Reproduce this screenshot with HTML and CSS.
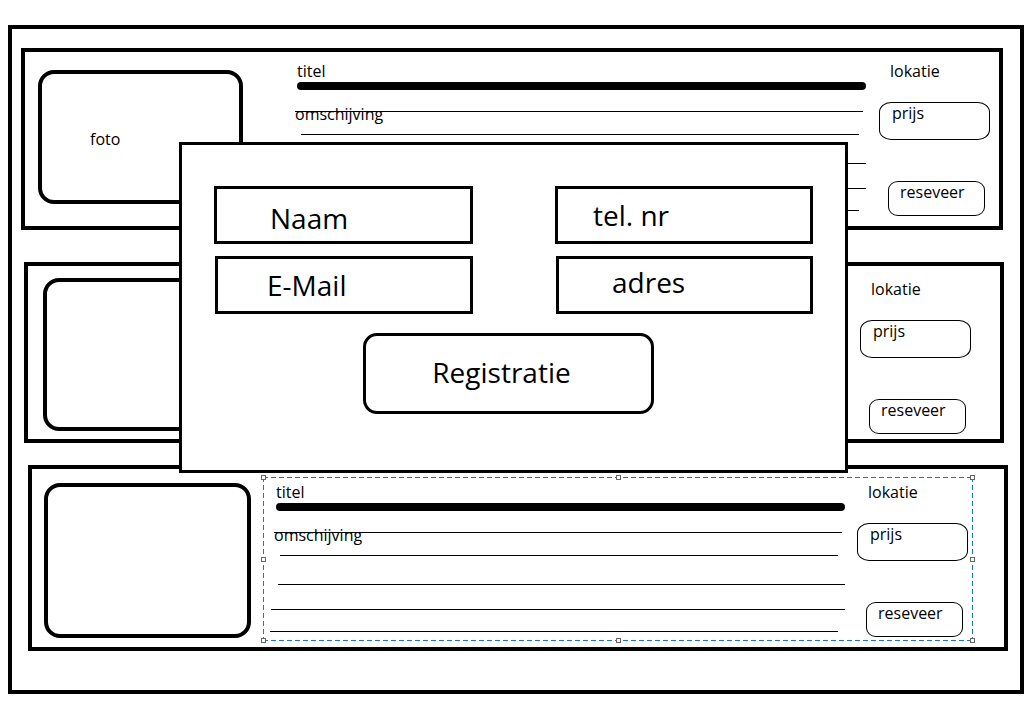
FILE: index.html
```html
<!DOCTYPE html>
<html lang="nl">
<head>
    <meta charset="UTF-8">
    <meta name="viewport" content="width=device-width, initial-scale=1.0">
    <title>Reseveren - schets</title>
    <link rel="stylesheet" href="styles.css">
</head>
<body>
    <div class="frame">

        <!-- kaart 1 -->
        <div class="card card-1">
            <div class="photo">foto</div>
            <div class="main">
                <div class="label">titel</div>
                <div class="bar"></div>
                <div class="label desc">omschijving</div>
                <div class="lines">
                    <div class="line l1"></div>
                    <div class="line l2"></div>
                    <div class="line l3"></div>
                    <div class="line l4"></div>
                    <div class="line l5"></div>
                </div>
            </div>
            <div class="side">
                <div class="label loc">lokatie</div>
                <div class="price">prijs</div>
                <div class="book">reseveer</div>
            </div>
        </div>

        <!-- kaart 2 (tekst valt onder de popup) -->
        <div class="card card-2">
            <div class="photo"></div>
            <div class="main">
                <div class="label"></div>
                <div class="bar"></div>
                <div class="label desc"></div>
                <div class="lines">
                    <div class="line l1"></div>
                    <div class="line l2"></div>
                    <div class="line l3"></div>
                    <div class="line l4"></div>
                    <div class="line l5"></div>
                </div>
            </div>
            <div class="side">
                <div class="label loc">lokatie</div>
                <div class="price">prijs</div>
                <div class="book">reseveer</div>
            </div>
        </div>

        <!-- kaart 3 (geselecteerd) -->
        <div class="card card-3">
            <div class="photo"></div>
            <div class="main">
                <div class="label">titel</div>
                <div class="bar"></div>
                <div class="label desc">omschijving</div>
                <div class="lines">
                    <div class="line l1"></div>
                    <div class="line l2"></div>
                    <div class="line l3"></div>
                    <div class="line l4"></div>
                    <div class="line l5"></div>
                </div>
            </div>
            <div class="side">
                <div class="label loc">lokatie</div>
                <div class="price">prijs</div>
                <div class="book">reseveer</div>
            </div>

            <div class="selection">
                <span class="handle h-tl"></span>
                <span class="handle h-tm"></span>
                <span class="handle h-tr"></span>
                <span class="handle h-ml"></span>
                <span class="handle h-mr"></span>
                <span class="handle h-bl"></span>
                <span class="handle h-bm"></span>
                <span class="handle h-br"></span>
            </div>
        </div>

        <!-- registratie popup -->
        <div class="modal">
            <div class="fields">
                <div class="field f-naam">Naam</div>
                <div class="field f-tel">tel. nr</div>
                <div class="field f-mail">E-Mail</div>
                <div class="field f-adres">adres</div>
            </div>
            <div class="register">Registratie</div>
        </div>

    </div>
</body>
</html>
```

FILE: styles.css
```css
body {
    margin: 0;
    background: #fff;
    color: #000;
    font-family: "Open Sans", "Noto Sans", sans-serif;
}

.frame {
    position: relative;
    box-sizing: border-box;
    width: 1016px;
    height: 669px;
    margin: 25px 0 0 8px;
    border: 4px solid #000;
}

/* kaarten */
.card {
    position: relative;
    box-sizing: border-box;
    display: flex;
    align-items: flex-start;
    border: 4px solid #000;
}

.card-1 {
    width: 982px;
    height: 182px;
    margin: 19px 0 0 9px;
}

.card-2 {
    width: 980px;
    height: 181px;
    margin: 32px 0 0 12px;
}

.card-3 {
    width: 980px;
    height: 186px;
    margin: 22px 0 0 16px;
}

.photo {
    flex-shrink: 0;
    box-sizing: border-box;
    border: 4px solid #000;
    border-radius: 16px;
    font-size: 16px;
    line-height: 20px;
}

.card-1 .photo {
    width: 205px;
    height: 134px;
    margin: 18px 0 0 13px;
    padding: 55px 0 0 48px;
}

.card-2 .photo {
    width: 205px;
    height: 153px;
    margin: 12px 0 0 15px;
}

.card-3 .photo {
    width: 207px;
    height: 155px;
    margin: 14px 0 0 12px;
}

.main {
    flex-shrink: 0;
    width: 569px;
}

.card-1 .main { margin-left: 54px; padding-top: 9px; }
.card-2 .main { margin-left: 20px; padding-top: 12px; }
.card-3 .main { margin-left: 25px; padding-top: 13px; }

.label {
    min-height: 20px;
    font-size: 16px;
    line-height: 20px;
}

.bar {
    height: 8px;
    margin-top: 1px;
    background: #000;
    border-radius: 4px;
}

.desc {
    margin: 14px 0 0 -2px;
}

.lines {
    margin-top: -13px;
}

.line {
    height: 1px;
    background: #000;
}

.l1 { width: 568px; margin-left: -2px; }
.l2 { width: 558px; margin: 22px 0 0 4px; }
.l3 { width: 567px; margin: 28px 0 0 2px; }
.l4 { width: 574px; margin: 24px 0 0 -5px; }
.l5 { width: 568px; margin: 21px 0 0 -6px; }

/* rechter kolom */
.side {
    display: flex;
    flex-direction: column;
    align-items: flex-start;
}

.card-1 .side { margin-left: 13px; padding-top: 9px; }
.card-2 .side { margin-left: 23px; padding-top: 13px; }
.card-3 .side { margin-left: 12px; padding-top: 13px; }

.loc {
    margin-left: 11px;
}

.price,
.book {
    box-sizing: border-box;
    border: 1px solid #000;
    font-size: 16px;
    line-height: 20px;
}

.price {
    width: 111px;
    height: 38px;
    margin-top: 21px;
    padding-left: 12px;
    border-radius: 12px / 10px;
}

.book {
    width: 97px;
    height: 35px;
    margin: 41px 0 0 9px;
    padding-left: 11px;
    border-radius: 10px / 9px;
}

/* selectie kader (paint) */
.selection {
    position: absolute;
    left: 231px;
    top: 8px;
    width: 710px;
    height: 164px;
    background:
        repeating-linear-gradient(90deg, #0f78d4 0 5px, transparent 5px 8px) top left / 100% 1px no-repeat,
        repeating-linear-gradient(90deg, #0f78d4 0 5px, transparent 5px 8px) bottom left / 100% 1px no-repeat,
        repeating-linear-gradient(180deg, #0f78d4 0 5px, transparent 5px 8px) top left / 1px 100% no-repeat,
        repeating-linear-gradient(180deg, #0f78d4 0 5px, transparent 5px 8px) top right / 1px 100% no-repeat;
}

.handle {
    position: absolute;
    width: 5px;
    height: 5px;
    box-sizing: border-box;
    border: 1px solid #666;
    background: #fff;
}

.h-tl { left: -2px; top: -2px; }
.h-tm { left: 353px; top: -2px; }
.h-tr { right: -2px; top: -2px; }
.h-ml { left: -2px; top: 80px; }
.h-mr { right: -2px; top: 80px; }
.h-bl { left: -2px; bottom: -2px; }
.h-bm { left: 353px; bottom: -2px; }
.h-br { right: -2px; bottom: -2px; }

/* popup */
.modal {
    position: absolute;
    left: 167px;
    top: 113px;
    box-sizing: border-box;
    width: 669px;
    height: 331px;
    padding: 41px 0 0 32px;
    border: 3px solid #000;
    background: #fff;
}

.fields {
    display: grid;
    grid-template-columns: 259px 259px;
    grid-auto-rows: 58px;
    column-gap: 81px;
    row-gap: 12px;
}

.field {
    box-sizing: border-box;
    display: flex;
    align-items: center;
    border: 3px solid #000;
    font-size: 28px;
    line-height: 36px;
}

.f-naam  { padding: 6px 0 0 53px; }
.f-tel   { padding-left: 35px; margin-left: 1px; }
.f-mail  { padding-left: 49px; margin-left: 1px; }
.f-adres { padding: 0 0 7px 53px; margin-left: 2px; }

.register {
    box-sizing: border-box;
    display: flex;
    align-items: center;
    justify-content: center;
    width: 291px;
    height: 81px;
    margin: 19px 0 0 149px;
    padding: 0 14px 4px 0;
    border: 3px solid #000;
    border-radius: 14px;
    font-size: 28px;
    line-height: 36px;
}
```
